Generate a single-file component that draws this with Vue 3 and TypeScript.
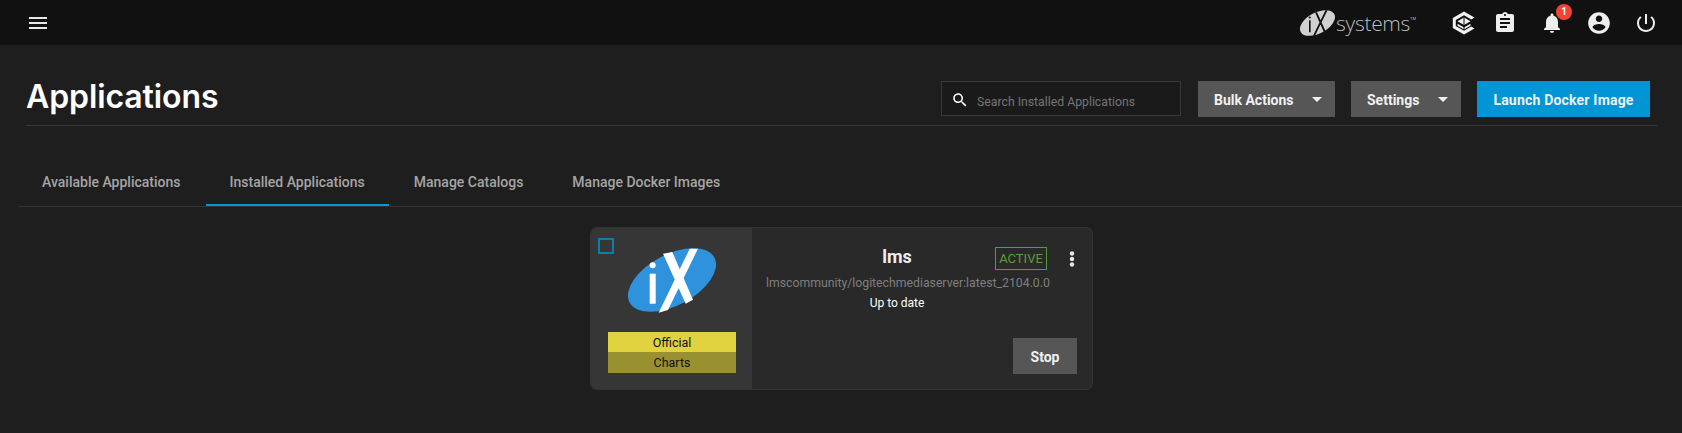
<script setup lang="ts">
const tabs = [
  { label: 'Available Applications', active: false },
  { label: 'Installed Applications', active: true },
  { label: 'Manage Catalogs', active: false },
  { label: 'Manage Docker Images', active: false },
]
</script>

<template>
  <div class="page">
    <header class="topbar">
      <svg class="menu" width="18" height="12" viewBox="0 0 18 12"><path fill="#e8e8e8" d="M0 0h18v2H0zM0 5h18v2H0zM0 10h18v2H0z" /></svg>
      <div class="top-right">
        <div class="brand">
          <svg width="35" height="26" viewBox="0 0 35 26">
            <ellipse cx="17.500" cy="13" rx="19" ry="10.500" transform="rotate(-28 17.500 13)" fill="#d0d0d0" />
            <path d="M15 2.300h2L25.500 21l-1.700.9zM25.500.3h2L15 25.700h-2z" fill="#111" />
            <rect x="9" y="10.300" width="1.600" height="12" fill="#111" /><circle cx="9.800" cy="7.500" r="1.100" fill="#111" />
          </svg>
          <span class="brand-text">systems</span><span class="tm">TM</span>
        </div>
        <svg class="i1" width="24" height="24" viewBox="0 0 24 24"><path fill="#f2f2f2" d="M12 .500l10.500 6-3.200 1.900L12 4.300 3.800 9v6l8.200 4.700 7.300-4.100 3.200 1.900L12 23.500 .8 17V7z" /><path fill="#f2f2f2" d="M12 6.500l6.500 3.700-6.500 3.700-6.500-3.700zM5.500 12.800l6.500 3.700 6.500-3.700v1.900L12 18.400l-6.500-3.700z" /><path fill="#111" d="M11.500 6.500h1v12h-1z" /></svg>
        <svg class="i2" width="24" height="24" viewBox="0 0 24 24"><path fill="#eee" d="M19 3h-4.200C14.400 1.800 13.300 1 12 1s-2.400.8-2.800 2H5c-1.100 0-2 .9-2 2v14c0 1.100.9 2 2 2h14c1.100 0 2-.9 2-2V5c0-1.100-.9-2-2-2zm-7 0c.6 0 1 .4 1 1s-.4 1-1 1-1-.4-1-1 .4-1 1-1zm2 14H7v-2h7v2zm3-4H7v-2h10v2zm0-4H7V7h10v2z" /></svg>
        <div class="bell">
          <svg width="24" height="24" viewBox="0 0 24 24"><path fill="#eee" d="M12 22c1.100 0 2-.9 2-2h-4c0 1.100.9 2 2 2zm6-6v-5c0-3.100-1.600-5.600-4.500-6.300V4c0-.8-.7-1.500-1.500-1.500s-1.500.7-1.500 1.500v.7C7.600 5.400 6 7.900 6 11v5l-2 2v1h16v-1z" /></svg>
          <span class="badge">1</span>
        </div>
        <svg class="i4" width="26" height="26" viewBox="0 0 24 24"><path fill="#eee" d="M12 2C6.500 2 2 6.500 2 12s4.500 10 10 10 10-4.500 10-10S17.500 2 12 2zm0 3c1.700 0 3 1.300 3 3s-1.300 3-3 3-3-1.300-3-3 1.300-3 3-3zm0 14.200c-2.500 0-4.700-1.300-6-3.200 0-2 4-3.100 6-3.100s6 1.100 6 3.100c-1.300 1.900-3.500 3.200-6 3.200z" /></svg>
        <svg class="i5" width="24" height="24" viewBox="0 0 24 24"><path fill="#eee" d="M13 3h-2v10h2zm4.800 2.200l-1.400 1.400C17.900 7.800 19 9.800 19 12c0 3.900-3.100 7-7 7s-7-3.100-7-7c0-2.200 1.100-4.200 2.600-5.400L6.200 5.200C4.200 6.900 3 9.300 3 12c0 5 4 9 9 9s9-4 9-9c0-2.700-1.200-5.100-3.200-6.800z" /></svg>
      </div>
    </header>

    <main class="content">
      <section class="head">
        <h1>Applications</h1>
        <div class="actions">
          <label class="search">
            <svg width="18" height="18" viewBox="0 0 24 24"><path fill="#fff" d="M15.500 14h-.8l-.3-.3c1-1.100 1.600-2.600 1.600-4.200C16 5.900 13.100 3 9.500 3S3 5.900 3 9.500 5.900 16 9.500 16c1.600 0 3.100-.6 4.200-1.600l.3.3v.8l5 5 1.500-1.500-5-5zm-6 0C7 14 5 12 5 9.500S7 5 9.500 5 14 7 14 9.500 12 14 9.500 14z" /></svg>
            <span class="placeholder">Search Installed Applications</span>
          </label>
          <button class="btn bulk">Bulk Actions<i class="caret"></i></button>
          <button class="btn settings">Settings<i class="caret"></i></button>
          <button class="btn primary">Launch Docker Image</button>
        </div>
      </section>

      <nav class="tabs">
        <div v-for="t in tabs" :key="t.label" class="tab" :class="{ active: t.active }">{{ t.label }}</div>
      </nav>

      <section class="cards">
        <article class="card">
          <div class="card-left">
            <span class="check"></span>
            <svg class="logo" width="88" height="66" viewBox="0 0 88 66">
              <ellipse cx="44" cy="32" rx="48" ry="25.500" transform="rotate(-28 44 32)" fill="#2e92dc" />
              <path d="M35 5.700L44.300 4 65 51.700 57.700 55.700zM61.700 .7H70L40 62 30.700 64.700z" fill="#fff" />
              <rect x="21.700" y="25.700" width="6" height="30" fill="#fff" /><circle cx="24.700" cy="17.300" r="3" fill="#fff" />
            </svg>
            <div class="tag">
              <div class="t1">Official</div>
              <div class="t2">Charts</div>
            </div>
          </div>
          <div class="card-right">
            <div class="row-top">
              <div class="name">lms</div>
              <span class="status">ACTIVE</span>
              <svg class="dots" width="6" height="16" viewBox="0 0 6 16"><circle cx="3" cy="2.500" r="2.200" fill="#e6e6e6" /><circle cx="3" cy="8" r="2.200" fill="#e6e6e6" /><circle cx="3" cy="13.500" r="2.200" fill="#e6e6e6" /></svg>
            </div>
            <div class="image">lmscommunity/logitechmediaserver:latest_2104.0.0</div>
            <div class="uptodate">Up to date</div>
            <div class="foot"><button class="btn stop">Stop</button></div>
          </div>
        </article>
      </section>
    </main>
  </div>
</template>

<style>
html, body { margin: 0; background: #1e1e1e; }
</style>

<style scoped>
.page { width: 1682px; height: 433px; overflow: hidden; background: #1e1e1e; font-family: Roboto, "Liberation Sans", sans-serif; color: #fff; }
.topbar { height: 45px; background: #111; display: flex; align-items: center; justify-content: space-between; padding: 0 24px 0 29px; box-sizing: border-box; }
.top-right { display: flex; align-items: center; }
.brand { display: flex; align-items: center; margin-right: 36px; color: #bdbdbd; }
.brand-text { font-family: "Open Sans", sans-serif; font-size: 21px; font-weight: 300; letter-spacing: -.3px; margin-left: 1px; line-height: 26px; }
.tm { font-size: 4px; margin-bottom: 8px; }
.i2 { margin-left: 17px; }
.bell { position: relative; width: 24px; height: 24px; margin-left: 23px; }
.i4 { margin-left: 22px; }
.i5 { margin-left: 22px; }
.badge { position: absolute; top: -7px; right: -8px; width: 16px; height: 16px; border-radius: 50%; background: #f44336; color: #fff; font-size: 10px; font-weight: 700; display: flex; align-items: center; justify-content: center; }
.content { padding: 0 0 0 18px; }
.head { display: flex; justify-content: space-between; align-items: flex-start; margin: 0 25px 0 8px; height: 81px; border-bottom: 1px solid #383838; box-sizing: border-box; padding-top: 36px; }
h1 { margin: -4px 0 0; font-family: Inter, sans-serif; font-size: 32px; line-height: 40px; font-weight: 600; letter-spacing: -.1px; color: #fff; }
.actions { display: flex; gap: 16px; margin-right: 7px; }
.search { width: 240px; height: 35px; box-sizing: border-box; border: 1px solid #383838; background: #1a1a1a; display: flex; align-items: center; padding: 3px 0 0 9px; gap: 8px; color: #757575; font-size: 12.250px; margin-right: 1px; }
.placeholder { margin-top: 4px; }
.btn { height: 36px; border: 0; padding: 1px 13px 0 16px; font-family: Roboto, sans-serif; font-size: 14px; font-weight: 700; color: #f0f0f0; background: #565656; display: flex; align-items: center; justify-content: space-between; box-sizing: border-box; }
.bulk { width: 137px; }
.settings { width: 110px; }
.primary { width: 173px; background: #0095d5; justify-content: center; letter-spacing: .2px; padding: 1px 0 0; }
.caret { border-left: 5px solid transparent; border-right: 5px solid transparent; border-top: 5px solid #f0f0f0; }
.tabs { display: flex; gap: 1px; height: 81px; box-sizing: border-box; padding-top: 24px; border-bottom: 1px solid #333; }
.tab { padding: 12px 24px 0; height: 56px; line-height: 40px; font-size: 14px; font-weight: 500; color: #a5a5a5; box-sizing: border-box; }
.tab.active { border-bottom: 2px solid #0095d5; }
.cards { display: flex; padding-left: 573px; padding-top: 21px; }
.card { width: 501px; height: 161px; display: flex; border-radius: 6px; overflow: hidden; background: #292929; box-shadow: 0 0 0 1px #333; }
.card-left { width: 161px; background: #363636; position: relative; display: flex; flex-direction: column; align-items: center; box-sizing: border-box; padding-top: 20px; }
.check { position: absolute; left: 7px; top: 10px; width: 16px; height: 16px; box-sizing: border-box; border: 2px solid #0b7eb0; }
.logo { display: block; margin-left: 1px; }
.tag { width: 128px; margin-top: 18px; margin-left: 1px; font-size: 12.500px; text-align: center; color: #111; }
.t1 { height: 20px; line-height: 22px; background: #e0d33f; }
.t2 { height: 21px; line-height: 21px; background: #99902f; }
.card-right { flex: 1; position: relative; padding: 0 15px 15px 14px; box-sizing: border-box; display: flex; flex-direction: column; }
.row-top { position: relative; height: 46px; }
.name { width: 262px; text-align: center; font-size: 18px; font-weight: 700; line-height: 20px; padding-top: 19px; color: #eee; }
.status { position: absolute; top: 19px; left: 229px; width: 52px; height: 23px; box-sizing: border-box; border: 1px solid #5a9a35; color: #5c9e36; font-size: 13px; display: flex; align-items: center; justify-content: center; }
.dots { position: absolute; left: 303px; top: 23px; }
.image { font-size: 12.250px; color: #7f7f7f; line-height: 16px; width: 262px; text-align: center; margin-top: 1px; white-space: nowrap; }
.uptodate { font-size: 12px; font-weight: 400; color: #fff; line-height: 16px; width: 262px; text-align: center; margin-top: 4px; }
.foot { margin-top: auto; display: flex; justify-content: flex-end; }
.stop { width: 64px; justify-content: center; padding: 1px 0 0; }
</style>
